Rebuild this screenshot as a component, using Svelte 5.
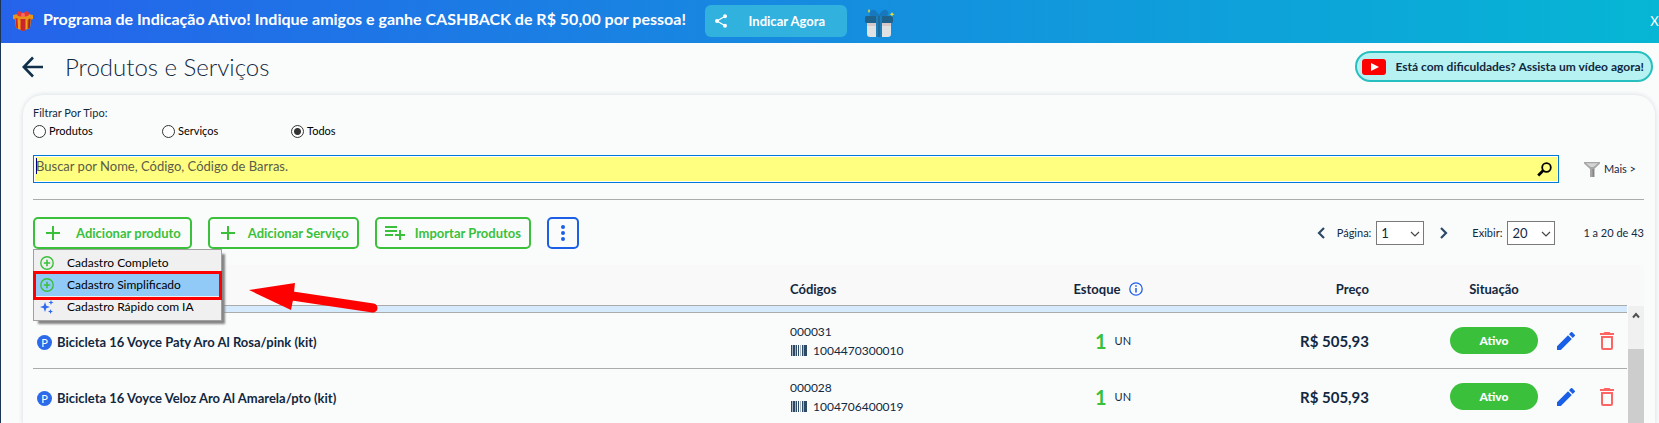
<script lang="ts">
	type Product = { name: string; code: string; barcode: string; stock: number; price: string };

	const products: Product[] = [
		{
			name: 'Bicicleta 16 Voyce Paty Aro Al Rosa/pink (kit)',
			code: '000031',
			barcode: '1004470300010',
			stock: 1,
			price: 'R$ 505,93'
		},
		{
			name: 'Bicicleta 16 Voyce Veloz Aro Al Amarela/pto (kit)',
			code: '000028',
			barcode: '1004706400019',
			stock: 1,
			price: 'R$ 505,93'
		}
	];

	const types = ['Produtos', 'Serviços', 'Todos'];

	let type = $state('Todos');
	let search = $state('');
	let page = $state('1');
	let perPage = $state('20');
	let menuOpen = $state(true);
</script>

{#snippet plus()}
	<svg width="14" height="14" viewBox="0 0 14 14" aria-hidden="true">
		<path d="M7 0v14M0 7h14" stroke="currentColor" stroke-width="2" />
	</svg>
{/snippet}

{#snippet plusCircle()}
	<svg width="14" height="14" viewBox="0 0 14 14" fill="none" stroke="#3bc03b" aria-hidden="true">
		<circle cx="7" cy="7" r="6.2" stroke-width="1.4" />
		<path d="M7 3.8v6.4M3.8 7h6.4" stroke-width="1.6" />
	</svg>
{/snippet}

{#snippet chevron()}
	<svg class="chevron" width="10" height="6" viewBox="0 0 10 6" fill="none" aria-hidden="true">
		<path d="M1 1l4 4 4-4" stroke="#444" stroke-width="1.2" />
	</svg>
{/snippet}

<div class="page">
	<div class="banner">
		<svg width="20" height="20" viewBox="0 0 20 20" aria-hidden="true">
			<path d="M2 6h16l-1 11-7 3-7-3z" fill="#f0a01c" />
			<path d="M14 6h4l-1 11-3 1.300z" fill="#c97a14" />
			<path d="M0 4l10-2 10 2v4l-10 2L0 8z" fill="#e8941a" />
			<path d="M7.500 8h5v11.200L10 20l-2.500-.8zM2.500 7l2 .6.500 10.200-1.700-.8z" fill="#c9252b" />
			<path d="M15.500 8l2-.5-.7 9.500-1.600.7z" fill="#b01c22" />
			<path d="M10 5C7 6 3 5 4 2s5-2 6 1c1-3 5-4 6-1s-3 4-6 3z" fill="#e5343a" />
			<circle cx="10" cy="4" r="2" fill="#ff6a5e" />
		</svg>
		<strong>Programa de Indicação Ativo! Indique amigos e ganhe CASHBACK de R$ 50,00 por pessoa!</strong>
		<button class="share">
			<svg width="12" height="14" viewBox="0 0 12 14" fill="#fff" aria-hidden="true">
				<path d="M10 2.200L2 7l8 4.800" fill="none" stroke="#fff" stroke-width="1.300" />
				<circle cx="10" cy="2.200" r="2" />
				<circle cx="2" cy="7" r="2" />
				<circle cx="10" cy="11.800" r="2" />
			</svg>
			<span>Indicar Agora</span>
		</button>
		<svg class="gift" width="30" height="28" viewBox="0 0 30 28" aria-hidden="true">
			<path d="M2 13h24v12a3 3 0 0 1-3 3H5a3 3 0 0 1-3-3z" fill="#dfe1e3" />
			<path d="M2 13h24v4H2z" fill="#d9c8c8" />
			<path d="M14 8C9 9 3 8 5 3c3-5 7-1 9 3 2-4 7-8 9-3 2 4-4 6-9 5z" fill="#1878bd" />
			<rect y="7" width="28" height="7" rx="1.500" fill="#1f638c" />
			<path d="M11 7h6v21h-6z" fill="#1a80bd" />
			<path d="M13 7h2v21h-2z" fill="#226a9b" />
			<path d="M27 3l.7 1.600L29.500 5.300l-1.800.7L27 7.800l-.7-1.800-1.800-.7 1.800-.7zM4 0l1 2-1 2-1-2z" fill="#f5e02a" />
		</svg>
		<button class="close" aria-label="Fechar">X</button>
	</div>

	<header>
		<a href="#voltar" class="back" aria-label="Voltar">
			<svg width="22" height="22" viewBox="0 0 22 22" fill="none" aria-hidden="true">
				<path d="M21 11H2M11 1.500L1.800 11l9.200 9.500" stroke="#12304a" stroke-width="2.600" />
			</svg>
		</a>
		<h1>Produtos e Serviços</h1>
		<a href="#video" class="video">
			<svg width="24" height="16" viewBox="0 0 24 16" aria-hidden="true">
				<rect width="24" height="16" rx="3" fill="#f00" />
				<path d="M9 4l8 4-8 4z" fill="#fff" />
			</svg>
			Está com dificuldades? Assista um vídeo agora!
		</a>
	</header>

	<main>
		<fieldset>
			<legend>Filtrar Por Tipo:</legend>
			<div class="types">
				{#each types as item}
					<label>
						<input type="radio" name="type" value={item} bind:group={type} />
						{item}
					</label>
				{/each}
			</div>
		</fieldset>

		<div class="search-row">
			<div class="search">
				<input
					type="text"
					aria-label="Buscar"
					placeholder="Buscar por Nome, Código, Código de Barras."
					bind:value={search}
				/>
				<button aria-label="Pesquisar">
					<svg width="15" height="15" viewBox="0 0 15 15" fill="none" stroke="#000" aria-hidden="true">
						<circle cx="9.500" cy="5.500" r="4.300" stroke-width="1.800" />
						<path d="M6.200 8.600L1.200 13.500" stroke-width="2.800" />
					</svg>
				</button>
			</div>
			<button class="more">
				<svg width="16" height="15" viewBox="0 0 16 15" aria-hidden="true">
					<path d="M0 0h16v1.500L10.300 7v8H6V7L0 1.500z" fill="#a6a6a6" />
					<path d="M2 1.200h12L9.500 5h-3z" fill="#d4d4d4" />
					<path d="M8.500 7h1.800v8H8.500z" fill="#868686" />
				</svg>
				Mais &gt;
			</button>
		</div>

		<hr />

		<div class="toolbar">
			<div class="dropdown">
				<button class="action" aria-expanded={menuOpen} onclick={() => (menuOpen = !menuOpen)}>
					{@render plus()}
					Adicionar produto
				</button>
				{#if menuOpen}
					<div class="menu" role="menu">
						<button role="menuitem">{@render plusCircle()}Cadastro Completo</button>
						<button role="menuitem" class="selected">{@render plusCircle()}Cadastro Simplificado</button>
						<button role="menuitem">
							<svg width="14" height="14" viewBox="0 0 14 14" fill="#2f6bf0" aria-hidden="true">
								<path d="M5 2l1.300 3.700L10 7 6.300 8.300 5 12 3.700 8.300 0 7l3.700-1.300z" />
								<path d="M11 0l.7 1.800 1.800.7-1.800.7L11 5l-.7-1.800-1.800-.7 1.800-.7zM10.500 9l.7 1.800 1.800.7-1.800.7-.7 1.800-.7-1.800L8 11.500l1.800-.7z" />
							</svg>
							Cadastro Rápido com IA
						</button>
						<div class="mark"></div>
						<svg class="arrow" width="130" height="32" viewBox="0 0 130 32" aria-hidden="true">
							<path d="M0 8L46 1l-1 9-1 8-2 10z" fill="#f00" />
							<path d="M40 13.500L124 26" stroke="#f00" stroke-width="9" stroke-linecap="round" />
						</svg>
					</div>
				{/if}
			</div>
			<button class="action service">
				{@render plus()}
				Adicionar Serviço
			</button>
			<button class="action import">
				<svg width="20" height="14" viewBox="0 0 20 14" aria-hidden="true">
					<path d="M0 1h12M0 5h12M0 9h8M15 4v10M10 9h10" stroke="currentColor" stroke-width="2" />
				</svg>
				Importar Produtos
			</button>
			<button class="options" aria-label="Mais opções">
				<svg width="4" height="16" viewBox="0 0 4 16" fill="currentColor" aria-hidden="true">
					<circle cx="2" cy="2" r="2" />
					<circle cx="2" cy="8" r="2" />
					<circle cx="2" cy="14" r="2" />
				</svg>
			</button>

			<div class="pager">
				<button aria-label="Página anterior">
					<svg width="8" height="12" viewBox="0 0 8 12" fill="none" aria-hidden="true">
						<path d="M7 1L2 6l5 5" stroke="#2c4a66" stroke-width="2.200" />
					</svg>
				</button>
				<label for="page">Página:</label>
				<span class="select">
					<select id="page" bind:value={page}>
						<option>1</option>
						<option>2</option>
						<option>3</option>
					</select>
					{@render chevron()}
				</span>
				<button class="next" aria-label="Próxima página">
					<svg width="8" height="12" viewBox="0 0 8 12" fill="none" aria-hidden="true">
						<path d="M1 1l5 5-5 5" stroke="#2c4a66" stroke-width="2.200" />
					</svg>
				</button>
				<label for="per-page">Exibir:</label>
				<span class="select">
					<select id="per-page" bind:value={perPage}>
						<option>20</option>
						<option>50</option>
					</select>
					{@render chevron()}
				</span>
				<span class="count">1 a 20 de 43</span>
			</div>
		</div>

		<div class="list">
			<table>
				<thead>
					<tr>
						<th class="name" aria-label="Nome"></th>
						<th class="codes">Códigos</th>
						<th class="stock">
							<div>
								Estoque
								<svg width="14" height="14" viewBox="0 0 14 14" fill="none" stroke="#1f5fe8" aria-hidden="true">
									<circle cx="7" cy="7" r="6.200" stroke-width="1.300" />
									<path d="M7 6v4.500M7 3.300v1.500" stroke-width="1.500" />
								</svg>
							</div>
						</th>
						<th class="price">Preço</th>
						<th class="status">Situação</th>
						<th class="tools" aria-label="Ações"></th>
					</tr>
				</thead>
				<tbody>
					<tr class="selected"><td colspan="6"></td></tr>
					{#each products as product}
						<tr>
							<td class="name">
								<div>
									<span class="badge">P</span>
									{product.name}
								</div>
							</td>
							<td class="codes">
								<div>{product.code}</div>
								<div class="barcode">
									<svg width="16" height="11" viewBox="0 0 16 11" fill="#2c4a66" aria-hidden="true">
										<path d="M0 0h1v11H0zM2 0h2v11H2zM5 0h1v11H5zM7 0h1v11H7zM11 0h1v11h-1zM13 0h3v11h-3z" />
										<path d="M1 0h1v11H1zM4 0h1v11H4zM9 0h1v11H9zM12 0h1v11h-1z" opacity="0.4" />
									</svg>
									{product.barcode}
								</div>
							</td>
							<td class="stock">
								<div><b>{product.stock}</b>UN</div>
							</td>
							<td class="price">{product.price}</td>
							<td class="status"><span>Ativo</span></td>
							<td class="tools">
								<div>
									<button aria-label="Editar">
										<svg width="18" height="18" viewBox="0 0 18 18" fill="#1a5fe6" aria-hidden="true">
											<path d="M0 14.200V18h3.800L14.800 7 11 3.200zM17.700 4.100a1 1 0 0 0 0-1.400L15.300.3a1 1 0 0 0-1.400 0L12 2.200 15.800 6z" />
										</svg>
									</button>
									<button aria-label="Excluir">
										<svg width="14" height="18" viewBox="0 0 14 18" fill="#ff6464" aria-hidden="true">
											<path d="M10.500 1L9.500 0h-5l-1 1H0v2h14V1zM1 4v12a2 2 0 0 0 2 2h8a2 2 0 0 0 2-2V4zm2 2h8v10H3z" fill-rule="evenodd" />
										</svg>
									</button>
								</div>
							</td>
						</tr>
					{/each}
				</tbody>
			</table>
			<div class="scroll">
				<div class="corner"></div>
				<button aria-label="Rolar para cima">
					<svg width="8" height="7" viewBox="0 0 8 7" fill="none" aria-hidden="true">
						<path d="M1 5.500l3-3.500 3 3.500" stroke="#505050" stroke-width="2" />
					</svg>
				</button>
				<div class="thumb"></div>
			</div>
		</div>
	</main>
</div>

<style>
	:global(body) {
		background: #fafcfc;
	}

	.page {
		display: flex;
		flex-direction: column;
		box-sizing: border-box;
		height: 100vh;
		overflow: hidden;
		border-left: 1px solid #1c3554;
		font-family: Lato, 'Liberation Sans', sans-serif;
		font-size: 11px;
		line-height: 16px;
		color: #12283f;
	}

	button {
		padding: 0;
		border: none;
		background: none;
		font: inherit;
		color: inherit;
		cursor: pointer;
	}

	a {
		color: inherit;
		text-decoration: none;
	}

	svg {
		display: block;
		flex: none;
	}

	.banner {
		display: flex;
		align-items: center;
		flex: none;
		box-sizing: border-box;
		height: 43px;
		padding-left: 12px;
		padding-bottom: 2px;
		background: linear-gradient(90deg, #2563eb, #06b6d4);
		color: #fff;
		white-space: nowrap;
	}

	.banner strong {
		margin-left: 10px;
		padding-bottom: 4px;
		font-size: 16px;
	}

	.share {
		display: flex;
		align-items: center;
		box-sizing: border-box;
		width: 142px;
		height: 32px;
		margin-left: 19px;
		padding-left: 10px;
		border-radius: 6px;
		background: #31b1de;
		font-size: 13px;
		font-weight: bold;
	}

	.share span {
		flex: 1;
	}

	.gift {
		margin: 4px 0 0 18px;
	}

	.close {
		width: 9px;
		margin-left: auto;
		font-size: 13px;
	}

	header {
		display: flex;
		align-items: center;
		flex: none;
		padding: 8px 6px 13px 21px;
	}

	h1 {
		margin: 0 auto 0 21px;
		font-size: 24px;
		font-weight: 300;
		line-height: 31px;
	}

	.video {
		display: flex;
		align-items: center;
		gap: 9px;
		box-sizing: border-box;
		height: 31px;
		padding: 0 7px 0 5px;
		border: 2px solid #27bfc0;
		border-radius: 16px;
		background: #b5f2f1;
		font-size: 12px;
		font-weight: bold;
	}

	main {
		display: flex;
		flex-direction: column;
		flex: 1;
		min-height: 0;
		margin: 0 4px 0 22px;
		padding: 10px 11px 0 10px;
		border-radius: 20px 20px 0 0;
		box-shadow: 0 0 4px 1px #e0e4e7;
	}

	fieldset {
		margin: 0;
		padding: 0;
		border: none;
	}

	legend {
		padding: 0;
	}

	.types {
		display: flex;
		margin-top: 2px;
		color: #000;
	}

	.types label {
		display: flex;
		align-items: center;
		gap: 3px;
		width: 129px;
	}

	.types input {
		appearance: none;
		width: 13px;
		height: 13px;
		margin: 0;
		border: 1px solid #333;
		border-radius: 50%;
		background: #fff;
	}

	.types input:checked {
		background: radial-gradient(circle, #333 3px, #fff 4px);
	}

	.search-row {
		display: flex;
		align-items: center;
		margin-top: 16px;
	}

	.search {
		position: relative;
		display: flex;
		flex: 1;
		box-sizing: border-box;
		height: 28px;
		padding: 1px;
		border: 1px solid #0078d7;
		background: #fff;
	}

	.search input {
		flex: 1;
		min-width: 0;
		padding: 0 0 6px 1px;
		border: none;
		outline: none;
		background: #ffff80;
		font: inherit;
		font-size: 13px;
	}

	.search input::placeholder {
		color: #5c5c4a;
	}

	/* text cursor */
	.search::before {
		content: '';
		position: absolute;
		top: 2px;
		left: 2px;
		width: 1px;
		height: 16px;
		background: #00007f;
	}

	.search button {
		padding: 0 5px;
		background: #ffff80;
	}

	.more {
		display: flex;
		align-items: center;
		gap: 4px;
		margin: 0 8px 0 25px;
	}

	hr {
		width: 100%;
		height: 1px;
		margin: 16px 0 17px;
		border: none;
		background: #ababab;
	}

	.toolbar {
		display: flex;
		gap: 16px;
	}

	.dropdown {
		position: relative;
	}

	.action {
		display: flex;
		align-items: center;
		gap: 16px;
		height: 32px;
		padding: 0 9px 0 11px;
		border: 2px solid #3bc03b;
		border-radius: 5px;
		font-size: 13px;
		font-weight: bold;
		color: #3bc03b;
		white-space: nowrap;
	}

	.service {
		gap: 13px;
		padding-right: 8px;
	}

	.import {
		gap: 10px;
		padding: 0 8px;
	}

	.options {
		display: flex;
		align-items: center;
		justify-content: center;
		width: 32px;
		height: 32px;
		border: 2px solid #1a5fe6;
		border-radius: 5px;
		color: #1a5fe6;
	}

	.menu {
		position: absolute;
		z-index: 1;
		top: 100%;
		left: 0;
		box-sizing: border-box;
		width: 189px;
		padding: 2px;
		border: 1px solid #a0a0a0;
		background: #f0f0f0;
		box-shadow: 4px 4px 2px -1px #858585;
	}

	.menu button {
		display: flex;
		align-items: center;
		gap: 13px;
		width: 100%;
		height: 22px;
		padding-left: 4px;
		font-size: 12px;
		color: #000;
		white-space: nowrap;
	}

	.menu .selected {
		background: #91c9f7;
	}

	/* red callout over the highlighted entry */
	.mark {
		position: absolute;
		top: 21px;
		left: -1px;
		box-sizing: border-box;
		width: 189px;
		height: 29px;
		border: 3px solid #f00;
	}

	.arrow {
		position: absolute;
		top: 32px;
		left: 215px;
	}

	.pager {
		display: flex;
		align-items: center;
		margin-left: auto;
		white-space: nowrap;
	}

	.pager label {
		margin: 0 5px 0 12px;
	}

	.pager .next {
		margin: 0 12px 0 16px;
	}

	.select {
		position: relative;
	}

	select {
		appearance: none;
		display: block;
		width: 48px;
		height: 24px;
		padding: 0 4px;
		border: 1px solid #7a7a7a;
		border-radius: 0;
		background: #fff;
		font: inherit;
		font-size: 13px;
		color: #12283f;
	}

	.chevron {
		position: absolute;
		top: 10px;
		right: 4px;
		pointer-events: none;
	}

	.count {
		margin-left: 28px;
	}

	.list {
		display: flex;
		flex: 1;
		gap: 1px;
		min-height: 0;
		margin-top: 16px;
		background: linear-gradient(#f9f9f9 40px, transparent 40px);
	}

	table {
		flex: 1;
		table-layout: fixed;
		width: 0;
		height: max-content;
		border-spacing: 0;
	}

	th,
	td {
		padding: 0;
		border-bottom: 1px solid #ababab;
		text-align: left;
	}

	th {
		height: 32px;
		padding-top: 8px;
		font-size: 13px;
		font-weight: bold;
	}

	td {
		height: 55px;
	}

	tr.selected td {
		height: 6px;
		background: #d6eafd;
	}

	.name div {
		display: flex;
		align-items: center;
		gap: 5px;
		padding: 3px 0 0 4px;
		font-size: 13px;
		font-weight: bold;
	}

	.badge {
		width: 15px;
		height: 15px;
		border-radius: 50%;
		background: #2b6ae8;
		font-size: 11px;
		font-weight: normal;
		line-height: 15px;
		text-align: center;
		color: #fff;
	}

	.codes {
		width: 239px;
	}

	td.codes {
		font-size: 12px;
		line-height: 19px;
	}

	.barcode {
		display: flex;
		align-items: center;
		gap: 6px;
		padding-left: 1px;
	}

	.stock {
		width: 168px;
	}

	.stock div {
		display: flex;
		align-items: center;
		justify-content: center;
		gap: 8px;
	}

	th.stock div {
		padding-right: 10px;
	}

	.stock b {
		font-size: 20px;
		color: #3bc03b;
	}

	.price {
		width: 172px;
		text-align: right;
	}

	td.price {
		font-size: 15px;
		font-weight: bold;
	}

	.status {
		width: 88px;
		padding-right: 7px;
		padding-left: 81px;
		text-align: center;
	}

	.status span {
		display: block;
		border-radius: 14px;
		background: #3bc03b;
		font-size: 12px;
		font-weight: 900;
		line-height: 27px;
		color: #fff;
	}

	.tools {
		width: 82px;
	}

	.tools div {
		display: flex;
		gap: 25px;
		padding-left: 12px;
	}

	.scroll {
		display: flex;
		flex-direction: column;
		width: 16px;
		background: #f0f0f0;
	}

	.corner {
		height: 41px;
		background: #f9f9f9;
	}

	.scroll button {
		display: flex;
		justify-content: center;
		padding: 6px 0 30px;
	}

	.thumb {
		flex: 1;
		background: #cdcdcd;
	}
</style>
